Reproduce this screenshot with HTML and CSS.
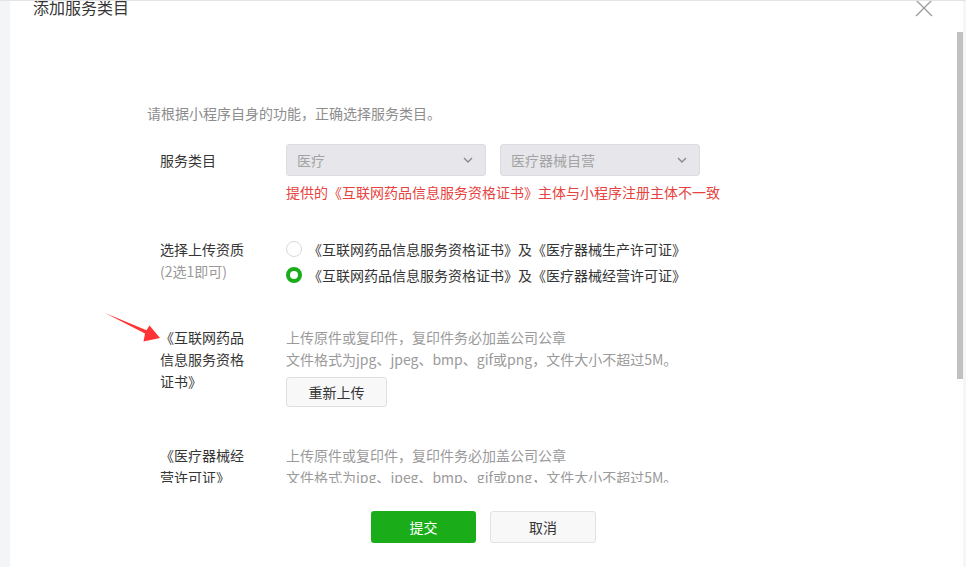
FILE: index.html
```html
<!DOCTYPE html>
<html lang="zh-CN">
<head>
    <meta charset="UTF-8">
    <meta name="viewport" content="width=device-width, initial-scale=1.0">
    <title>添加服务类目</title>
    <link rel="stylesheet" href="styles.css">
</head>
<body>
    <div class="page-edge"></div>

    <div class="dialog">
        <div class="dialog-hd">
            <h3 class="dialog-title">添加服务类目</h3>
            <a class="dialog-close" href="#">
                <svg width="18" height="18" viewBox="0 0 18 18"><path d="M1 1L17 17M17 1L1 17" stroke="#9a9a9a" stroke-width="1.3" fill="none"/></svg>
            </a>
        </div>

        <div class="dialog-bd">
            <p class="tips">请根据小程序自身的功能，正确选择服务类目。</p>

            <div class="form-row row-category">
                <label class="form-label label-select">服务类目</label>
                <div class="form-controls">
                    <div class="selects">
                        <div class="select">
                            <span>医疗</span>
                            <svg width="10" height="6" viewBox="0 0 10 6"><path d="M1 1L5 5L9 1" stroke="#8a8a8a" stroke-width="1.4" fill="none"/></svg>
                        </div>
                        <div class="select">
                            <span>医疗器械自营</span>
                            <svg width="10" height="6" viewBox="0 0 10 6"><path d="M1 1L5 5L9 1" stroke="#8a8a8a" stroke-width="1.4" fill="none"/></svg>
                        </div>
                    </div>
                    <p class="form-error">提供的《互联网药品信息服务资格证书》主体与小程序注册主体不一致</p>
                </div>
            </div>

            <div class="form-row row-qualify">
                <label class="form-label">选择上传资质<br><span class="label-tip">(2选1即可)</span></label>
                <div class="form-controls">
                    <div class="radio-item">
                        <span class="radio"></span>
                        <span>《互联网药品信息服务资格证书》及《医疗器械生产许可证》</span>
                    </div>
                    <div class="radio-item">
                        <span class="radio checked"></span>
                        <span>《互联网药品信息服务资格证书》及《医疗器械经营许可证》</span>
                    </div>
                </div>
            </div>

            <div class="form-row row-upload">
                <label class="form-label">《互联网药品信息服务资格证书》</label>
                <div class="form-controls">
                    <p class="upload-tip">上传原件或复印件，复印件务必加盖公司公章</p>
                    <p class="upload-tip">文件格式为jpg、jpeg、bmp、gif或png，文件大小不超过5M。</p>
                    <a class="btn-upload" href="#">重新上传</a>
                </div>
            </div>

            <div class="form-row row-upload-2">
                <label class="form-label">《医疗器械经营许可证》</label>
                <div class="form-controls">
                    <p class="upload-tip">上传原件或复印件，复印件务必加盖公司公章</p>
                    <p class="upload-tip">文件格式为jpg、jpeg、bmp、gif或png，文件大小不超过5M。</p>
                    <a class="btn-upload" href="#">上传文件</a>
                </div>
            </div>
        </div>

        <div class="dialog-ft">
            <a class="btn btn-primary" href="#">提交</a>
            <a class="btn btn-default" href="#">取消</a>
        </div>
    </div>

    <div class="scrollbar"><div class="scrollbar-thumb"></div></div>
    <div class="page-edge-right"></div>

    <!-- red annotation arrow over the form -->
    <svg class="note-arrow" width="66" height="42" viewBox="100 305 66 42">
        <polygon points="105,312 146.5,329.2 149.5,324.5 160,337 143.5,340.5 145,332.5" fill="#f33"/>
    </svg>
</body>
</html>
```

FILE: styles.css
```css
body {
    font-family: "Noto Sans CJK SC", "Noto Sans", sans-serif;
    font-size: 14px;
    color: #353535;
    margin: 0;
    padding: 0;
    height: 566px;
    overflow: hidden;
    display: flex;
    border-top: 1px solid #e4e4e4;
    background-color: #f4f5f7;
    position: relative;
}
p {
    margin: 0;
}
a {
    text-decoration: none;
    color: inherit;
}
.page-edge {
    width: 10px;
    flex-shrink: 0;
    background-color: #f4f5f7;
}
.page-edge-right {
    width: 3px;
    flex-shrink: 0;
    background-color: #f6f6f8;
}
.scrollbar {
    width: 6px;
    flex-shrink: 0;
    background-color: #fff;
    padding-top: 31px;
}
.scrollbar-thumb {
    height: 347px;
    background-color: #c1c1c1;
}
.dialog {
    flex: 1;
    background-color: #fff;
    display: flex;
    flex-direction: column;
}
.dialog-hd {
    height: 17px;
    overflow: hidden;
    display: flex;
    align-items: flex-end;
    justify-content: space-between;
    padding: 0 24px 0 23px;
}
.dialog-title {
    margin: 0;
    font-size: 16px;
    font-weight: normal;
    line-height: 22px;
}
.dialog-close {
    display: block;
    height: 18px;
    margin-bottom: 1px;
}
.dialog-bd {
    height: 465px;
    overflow: hidden;
    padding: 84px 0 0 137px;
    box-sizing: border-box;
}
.tips {
    color: #8d8d8d;
    line-height: 22px;
}
.form-row {
    display: grid;
    grid-template-columns: 139px 1fr;
    line-height: 22px;
}
.form-label {
    padding: 0 42px 0 13px;
}
.label-tip {
    color: #9a9a9a;
}
.row-category {
    margin-top: 20px;
}
.label-select {
    line-height: 32px;
}
.selects {
    display: flex;
    gap: 14px;
}
.select {
    width: 200px;
    height: 32px;
    box-sizing: border-box;
    border: 1px solid #dcdce0;
    border-radius: 3px;
    background-color: #e7e7eb;
    color: #a3a3a3;
    padding: 0 12px 0 10px;
    display: flex;
    align-items: center;
    justify-content: space-between;
}
.form-error {
    color: #e64340;
    margin-top: 5px;
}
.row-qualify {
    margin-top: 35px;
}
.radio-item {
    display: flex;
    align-items: center;
}
.radio-item + .radio-item {
    margin-top: 4px;
}
.radio {
    width: 16px;
    height: 16px;
    box-sizing: border-box;
    border: 1px solid #d9d9d9;
    border-radius: 50%;
    margin-right: 6px;
}
.radio.checked {
    border: 4px solid #1aad19;
}
.row-upload {
    margin-top: 40px;
}
.row-upload-2 {
    margin-top: 37px;
}
.upload-tip {
    color: #9a9a9a;
}
.btn-upload {
    display: block;
    width: 101px;
    height: 30px;
    line-height: 28px;
    box-sizing: border-box;
    margin-top: 7px;
    text-align: center;
    border: 1px solid #e0e0e0;
    border-radius: 3px;
    background-color: #f8f8f8;
}
.dialog-ft {
    display: flex;
    justify-content: center;
    gap: 14px;
    padding-top: 28px;
}
.btn {
    display: block;
    width: 105px;
    height: 32px;
    line-height: 30px;
    box-sizing: border-box;
    text-align: center;
    border-radius: 3px;
    border: 1px solid transparent;
}
.btn-primary {
    background-color: #1aad19;
    color: #fff;
}
.btn-default {
    width: 106px;
    background-color: #f8f8f8;
    border-color: #e2e2e2;
}
.note-arrow {
    position: absolute;
    left: 100px;
    top: 305px;
}
```
